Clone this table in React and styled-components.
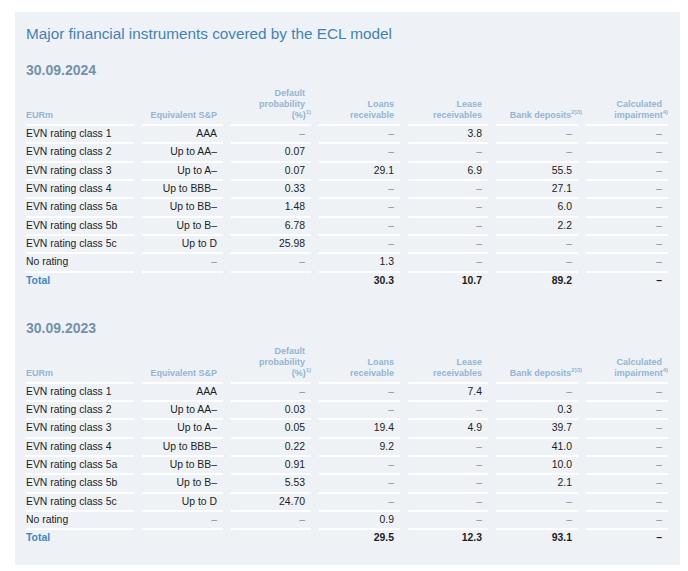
import React from 'react'
import styled, { createGlobalStyle } from 'styled-components'

const GlobalStyle = createGlobalStyle`
  body {
    margin: 0;
    background: #fff;
    font-family: "Liberation Sans", Arial, sans-serif;
  }
`

const DASH = '–'

const sections = [
  {
    date: '30.09.2024',
    rows: [
      ['EVN rating class 1', 'AAA', DASH, DASH, '3.8', DASH, DASH],
      ['EVN rating class 2', 'Up to AA–', '0.07', DASH, DASH, DASH, DASH],
      ['EVN rating class 3', 'Up to A–', '0.07', '29.1', '6.9', '55.5', DASH],
      ['EVN rating class 4', 'Up to BBB–', '0.33', DASH, DASH, '27.1', DASH],
      ['EVN rating class 5a', 'Up to BB–', '1.48', DASH, DASH, '6.0', DASH],
      ['EVN rating class 5b', 'Up to B–', '6.78', DASH, DASH, '2.2', DASH],
      ['EVN rating class 5c', 'Up to D', '25.98', DASH, DASH, DASH, DASH],
      ['No rating', DASH, DASH, '1.3', DASH, DASH, DASH],
    ],
    total: ['30.3', '10.7', '89.2', DASH],
  },
  {
    date: '30.09.2023',
    rows: [
      ['EVN rating class 1', 'AAA', DASH, DASH, '7.4', DASH, DASH],
      ['EVN rating class 2', 'Up to AA–', '0.03', DASH, DASH, '0.3', DASH],
      ['EVN rating class 3', 'Up to A–', '0.05', '19.4', '4.9', '39.7', DASH],
      ['EVN rating class 4', 'Up to BBB–', '0.22', '9.2', DASH, '41.0', DASH],
      ['EVN rating class 5a', 'Up to BB–', '0.91', DASH, DASH, '10.0', DASH],
      ['EVN rating class 5b', 'Up to B–', '5.53', DASH, DASH, '2.1', DASH],
      ['EVN rating class 5c', 'Up to D', '24.70', DASH, DASH, DASH, DASH],
      ['No rating', DASH, DASH, '0.9', DASH, DASH, DASH],
    ],
    total: ['29.5', '12.3', '93.1', DASH],
  },
]

function Header() {
  return (
    <>
      <HeadCell $left><span>EURm</span></HeadCell>
      <HeadCell><span>Equivalent S&amp;P</span></HeadCell>
      <HeadCell><span>Default<br />probability<br />(%)<Note>1)</Note></span></HeadCell>
      <HeadCell><span>Loans<br />receivable</span></HeadCell>
      <HeadCell><span>Lease<br />receivables</span></HeadCell>
      <HeadCell><span>Bank deposits<Note $wide>2)3)</Note></span></HeadCell>
      <HeadCell><span>Calculated<br />impairment<Note>4)</Note></span></HeadCell>
    </>
  )
}

function Section({ section, first }) {
  return (
    <SectionBox $first={first}>
      <DateTitle>{section.date}</DateTitle>
      <Grid>
        <Header />
        {section.rows.map((row, i) =>
          row.map((v, j) => (
            <Cell key={i + '-' + j} $left={j === 0} $muted={v === DASH}>{v}</Cell>
          ))
        )}
        <TotalLabel>Total</TotalLabel>
        <TotalCell />
        <TotalCell />
        {section.total.map((v, j) => (
          <TotalCell key={j}>{v}</TotalCell>
        ))}
      </Grid>
    </SectionBox>
  )
}

export default function App() {
  return (
    <>
      <GlobalStyle />
      <Panel>
        <Title>Major financial instruments covered by the ECL model</Title>
        {sections.map((s, i) => (
          <Section key={s.date} section={s} first={i === 0} />
        ))}
      </Panel>
    </>
  )
}

const Panel = styled.div`
  margin: 12px 0 0 15px;
  width: 665px;
  box-sizing: border-box;
  padding: 12px 0 20px 11px;
  background: #eef2f7;
`

const Title = styled.h1`
  margin: 0;
  font-size: 15.3px;
  line-height: 20px;
  font-weight: normal;
  color: #3e82b9;
`

const SectionBox = styled.section`
  margin-top: ${p => (p.$first ? '18px' : '32px')};
`

const DateTitle = styled.h2`
  margin: 0 0 8px;
  font-size: 14px;
  line-height: 16px;
  font-weight: bold;
  color: #7291ad;
`

const Grid = styled.div`
  display: grid;
  grid-template-columns: 108px 81px 80px 81px 80px 82px 82px;
  column-gap: 8px;
`

const HeadCell = styled.div`
  display: flex;
  align-items: flex-end;
  justify-content: ${p => (p.$left ? 'flex-start' : 'flex-end')};
  text-align: ${p => (p.$left ? 'left' : 'right')};
  padding: 2px ${p => (p.$left ? '0' : '6px')} 3px 0;
  font-size: 9px;
  line-height: 11px;
  font-weight: bold;
  color: #93b5d3;
  white-space: nowrap;
  border-bottom: 2px solid #fff;
`

const Note = styled.sup`
  font-size: 6px;
  vertical-align: 4px;
  line-height: 0;
  margin-right: ${p => (p.$wide ? '-10px' : '-6px')};
`

const Cell = styled.div`
  height: 16.34px;
  line-height: 16.34px;
  padding-right: ${p => (p.$left ? '0' : '6px')};
  text-align: ${p => (p.$left ? 'left' : 'right')};
  font-size: 10.4px;
  color: ${p => (p.$muted ? '#8b8f95' : '#1b1d22')};
  border-bottom: 2px solid #fff;
  white-space: nowrap;
`

const TotalLabel = styled.div`
  height: 15px;
  line-height: 15px;
  font-size: 10.4px;
  font-weight: bold;
  color: #3f87c2;
`

const TotalCell = styled.div`
  height: 15px;
  line-height: 15px;
  padding-right: 6px;
  text-align: right;
  font-size: 10.4px;
  font-weight: bold;
  color: #1b1d22;
`
